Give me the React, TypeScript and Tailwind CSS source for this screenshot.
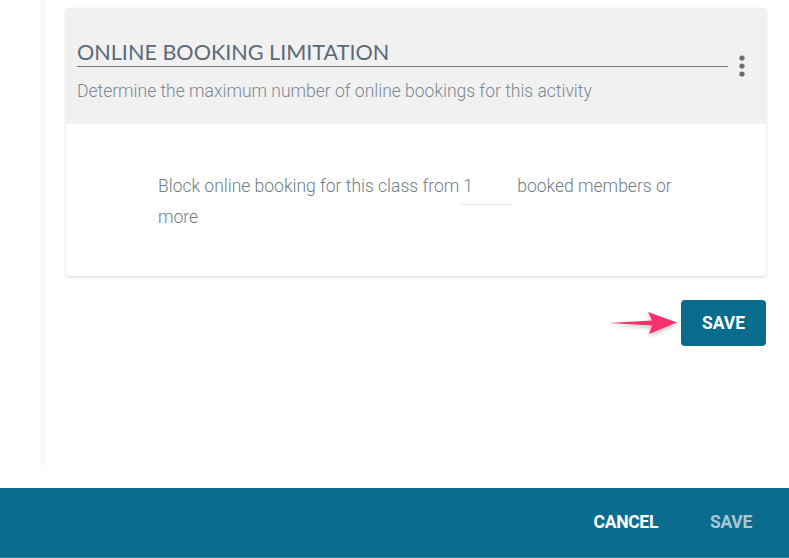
import React from "react";

const roboto = { fontFamily: "Roboto, 'Liberation Sans', sans-serif" };

function MoreIcon() {
  return (
    <svg width="8" height="22" viewBox="0 0 8 22" className="shrink-0">
      <circle cx="4" cy="3" r="2.6" fill="#5f6f7b" />
      <circle cx="4" cy="11" r="2.6" fill="#5f6f7b" />
      <circle cx="4" cy="19" r="2.6" fill="#5f6f7b" />
    </svg>
  );
}

// pink pointer next to the save button
function Pointer() {
  return (
    <svg width="74" height="40" viewBox="0 0 74 40" className="shrink-0">
      <defs>
        <filter id="drop" x="-20%" y="-40%" width="140%" height="200%">
          <feDropShadow dx="0" dy="2" stdDeviation="2" floodColor="#000" floodOpacity="0.25" />
        </filter>
      </defs>
      <path
        d="M2 20 L45 17.5 L41 9 L70 19.5 L42 31 L45 22.5 Z"
        fill="#f5306b"
        filter="url(#drop)"
      />
    </svg>
  );
}

export default function App() {
  return (
    <div className="w-[789px] h-[558px] bg-white flex flex-col overflow-hidden" style={roboto}>
      <div className="flex-1 flex min-h-0">
        {/* left panel edge */}
        <div className="w-[41px] shrink-0" />
        <div className="w-[6px] mb-[22px] bg-gradient-to-r from-[#f6f6f6] to-white shrink-0" />

        <div className="flex-1 flex flex-col pl-[19px] pr-[23px] pt-[8px]">
          <div className="bg-white rounded-[3px] shadow-[0_1px_3px_rgba(0,0,0,0.18)] overflow-hidden">
            <div className="bg-[#f1f1f1] h-[116px] pl-[11px] pr-[20px] pt-[31px] flex items-start gap-[10px]">
              <div className="flex-1">
                <h2
                  className="text-[21.6px] leading-[27px] text-[#5b6b78] border-b border-[#6b7a86]"
                  style={{ fontFamily: "Lato, 'Liberation Sans', sans-serif" }}
                >
                  ONLINE BOOKING LIMITATION
                </h2>
                <p className="mt-[12px] text-[17.5px] leading-[24px] font-light text-[#7b8891]">
                  Determine the maximum number of online bookings for this activity
                </p>
              </div>
              <div className="pt-[16px]">
                <MoreIcon />
              </div>
            </div>

            <div className="pl-[92px] pt-[47px] pb-[43px]">
              <p className="w-[540px] text-[17.5px] leading-[31px] font-light text-[#6f7c86]">
                Block online booking for this class from
                <span className="inline-block w-[51px] h-[34px] -mb-[3px] align-top border-b border-[#e6e6e6] pl-[2px] ml-[2px] mr-[5px]">
                  1
                </span>
                booked members or more
              </p>
            </div>
          </div>

          <div className="flex items-center justify-end mt-[24px]">
            <Pointer />
            <button className="w-[85px] h-[46px] rounded-[4px] bg-[#086c8c] text-white text-[17.5px] font-bold">
              SAVE
            </button>
          </div>
        </div>
      </div>

      <div className="h-[70px] shrink-0 bg-[#0a6d8d] border-b border-[#2c8aa7] flex items-center justify-end pr-[37px] gap-[52px]">
        <button className="text-white text-[17.5px] font-bold tracking-[-0.3px]">CANCEL</button>
        <button className="text-[#a8c9d4] text-[17.5px] font-bold tracking-[-0.3px]">SAVE</button>
      </div>
    </div>
  );
}
